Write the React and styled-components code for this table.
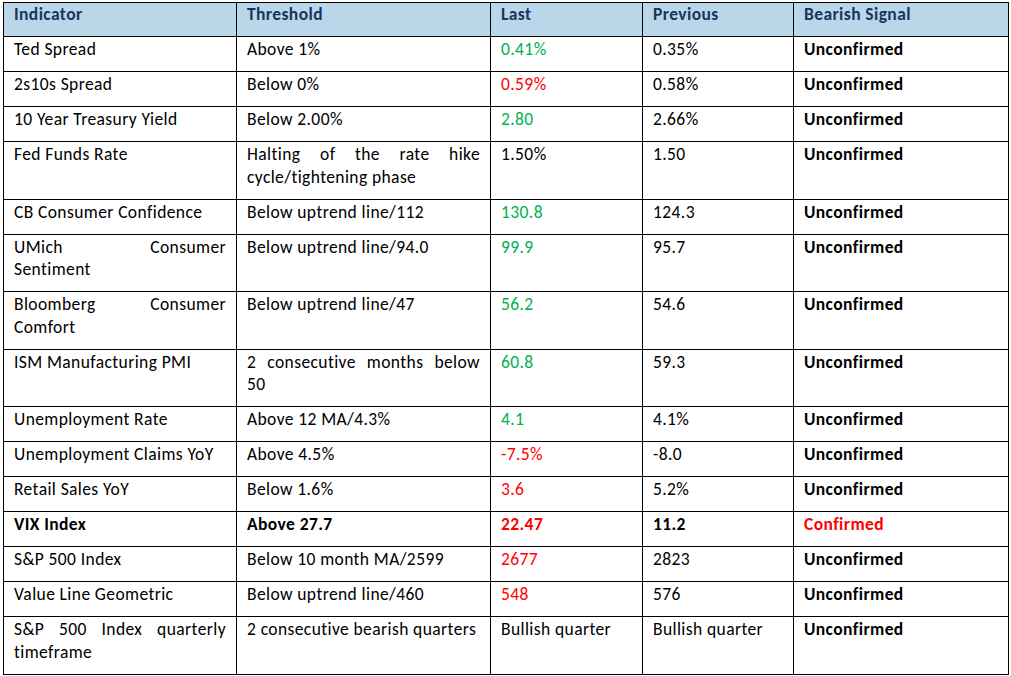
import React from 'react'
import styled, { createGlobalStyle } from 'styled-components'

const GlobalStyle = createGlobalStyle`
  html, body {
    margin: 0;
    padding: 0;
    background: #ffffff;
  }
  body {
    font-family: Carlito, Calibri, Lato, "Liberation Sans", sans-serif;
  }
`

const Page = styled.div`
  padding: 2px 0 0 3px;
`

const Table = styled.table`
  border-collapse: collapse;
  table-layout: fixed;
  width: 1005px;
  font-size: 17.5px;
  letter-spacing: 0.4px;
  line-height: 22.5px;
  color: #000;
`

const HeadCell = styled.th`
  border: 1px solid #000;
  background: #b9d7e8;
  color: #17375e;
  font-weight: 700;
  text-align: left;
  vertical-align: top;
  padding: 0 10px 10.5px 10px;
`

const Cell = styled.td`
  border: 1px solid #000;
  vertical-align: top;
  text-align: justify;
  padding: 1px 10px 10.5px 10px;
  font-weight: ${(p) => (p.$bold ? 700 : 400)};
  color: ${(p) =>
    p.$tone === 'up' ? '#00b050' : p.$tone === 'down' ? '#ff0000' : '#000'};
`

// a wrapped line that is spread across the cell, as in a justified paragraph
const Line = styled.span`
  display: block;
  text-align-last: ${(p) => (p.$spread ? 'justify' : 'auto')};
`

const cols = [233, 254, 152, 151, 215]

const rows = [
  ['Ted Spread', 'Above 1%', '0.41%', 'up', '0.35%', 'Unconfirmed'],
  ['2s10s Spread', 'Below 0%', '0.59%', 'down', '0.58%', 'Unconfirmed'],
  ['10 Year Treasury Yield', 'Below 2.00%', '2.80', 'up', '2.66%', 'Unconfirmed'],
  ['Fed Funds Rate', ['Halting of the rate hike', 'cycle/tightening phase'], '1.50%', null, '1.50', 'Unconfirmed'],
  ['CB Consumer Confidence', 'Below uptrend line/112', '130.8', 'up', '124.3', 'Unconfirmed'],
  [['UMich Consumer', 'Sentiment'], 'Below uptrend line/94.0', '99.9', 'up', '95.7', 'Unconfirmed'],
  [['Bloomberg Consumer', 'Comfort'], 'Below uptrend line/47', '56.2', 'up', '54.6', 'Unconfirmed'],
  ['ISM Manufacturing PMI', ['2 consecutive months below', '50'], '60.8', 'up', '59.3', 'Unconfirmed'],
  ['Unemployment Rate', 'Above 12 MA/4.3%', '4.1', 'up', '4.1%', 'Unconfirmed'],
  ['Unemployment Claims YoY', 'Above 4.5%', '-7.5%', 'down', '-8.0', 'Unconfirmed'],
  ['Retail Sales YoY', 'Below 1.6%', '3.6', 'down', '5.2%', 'Unconfirmed'],
  ['VIX Index', 'Above 27.7', '22.47', 'down', '11.2', 'Confirmed', true],
  ['S&P 500 Index', 'Below 10 month MA/2599', '2677', 'down', '2823', 'Unconfirmed'],
  ['Value Line Geometric', 'Below uptrend line/460', '548', 'down', '576', 'Unconfirmed'],
  [['S&P 500 Index quarterly', 'timeframe'], '2 consecutive bearish quarters', 'Bullish quarter', null, 'Bullish quarter', 'Unconfirmed'],
]

function Text({ value }) {
  if (!Array.isArray(value)) return value
  return value.map((line, i) => (
    <Line key={i} $spread={i < value.length - 1}>
      {line}
    </Line>
  ))
}

export default function App() {
  return (
    <Page>
      <GlobalStyle />
      <Table>
        <colgroup>
          {cols.map((w, i) => (
            <col key={i} style={{ width: w }} />
          ))}
        </colgroup>
        <thead>
          <tr>
            <HeadCell>Indicator</HeadCell>
            <HeadCell>Threshold</HeadCell>
            <HeadCell>Last</HeadCell>
            <HeadCell>Previous</HeadCell>
            <HeadCell>Bearish Signal</HeadCell>
          </tr>
        </thead>
        <tbody>
          {rows.map(([name, threshold, last, tone, prev, signal, hot], i) => (
            <tr key={i}>
              <Cell $bold={hot}><Text value={name} /></Cell>
              <Cell $bold={hot}><Text value={threshold} /></Cell>
              <Cell $bold={hot} $tone={tone}>{last}</Cell>
              <Cell $bold={hot}>{prev}</Cell>
              <Cell $bold $tone={hot ? 'down' : null}>{signal}</Cell>
            </tr>
          ))}
        </tbody>
      </Table>
    </Page>
  )
}
